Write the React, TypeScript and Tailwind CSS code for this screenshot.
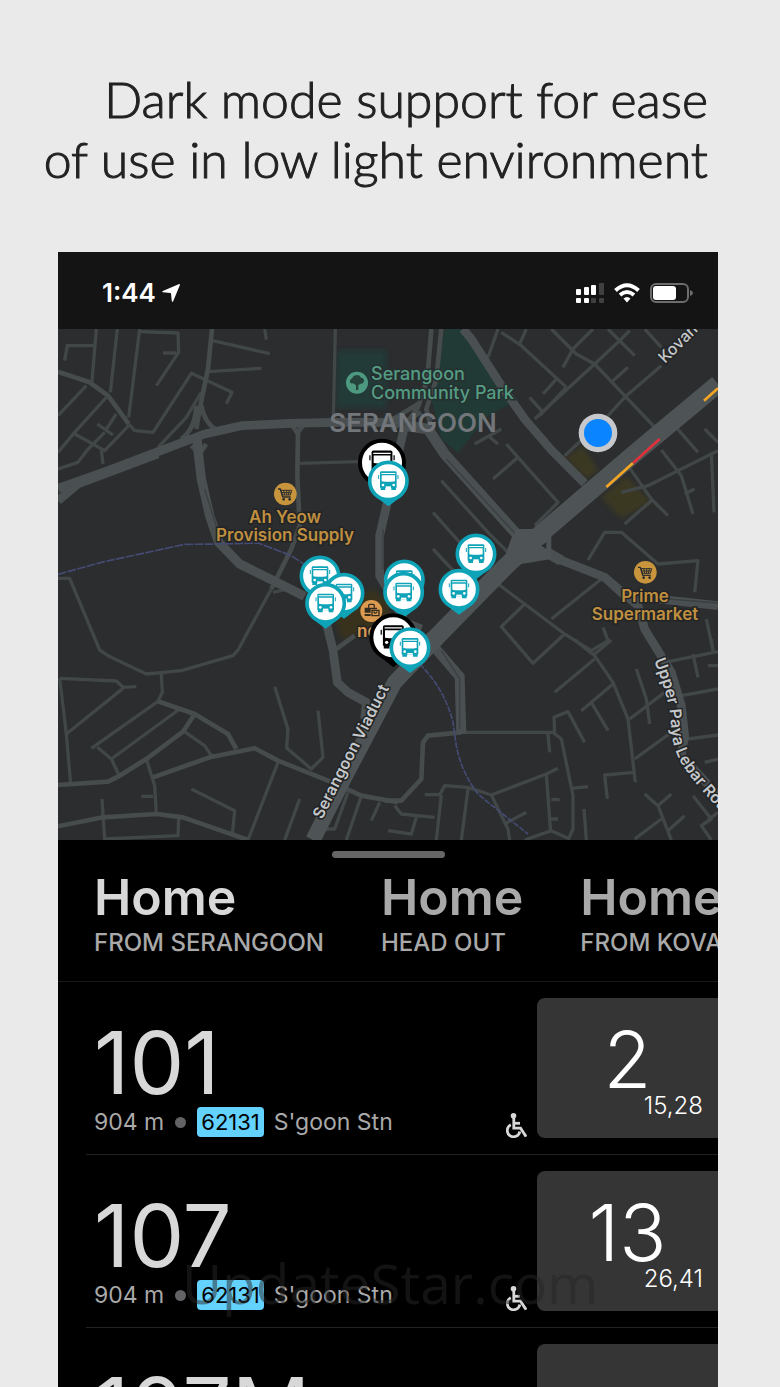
interface Service {
  number: string;
  distance: string;
  stopCode: string;
  stopName: string;
  next: string;
  later: string;
}

interface Pin {
  x: number;
  y: number;
}

const TABS = [
  { title: 'Home', subtitle: 'FROM SERANGOON', active: true },
  { title: 'Home', subtitle: 'HEAD OUT', active: false },
  { title: 'Home', subtitle: 'FROM KOVAN', active: false },
];

const SERVICES: Service[] = [
  { number: '101', distance: '904 m', stopCode: '62131', stopName: "S'goon Stn", next: '2', later: '15,28' },
  { number: '107', distance: '904 m', stopCode: '62131', stopName: "S'goon Stn", next: '13', later: '26,41' },
  { number: '107M', distance: '904 m', stopCode: '62131', stopName: "S'goon Stn", next: '', later: '' },
];

const PINS: Pin[] = [
  { x: 786, y: 741 },
  { x: 858, y: 793 },
  { x: 803, y: 823 },
  { x: 1039, y: 753 },
  { x: 1037, y: 790 },
  { x: 1254, y: 675 },
  { x: 1203, y: 781 },
];

// Map geometry is drawn on a 1980 x 1533 grid
const STREETS = [
  'M115 0L110 60L102 158M178 0L157 190M245 0L212 265M20 95L28 50H108',
  'M245 8L360 12L362 70L295 170M315 72H355M620 0L625 32',
  'M460 34L635 74M450 128L610 118M212 285L230 305L285 310L400 133L522 190L505 224',
  'M85 170L0 260M145 205L50 310L0 370M50 315L140 365L212 290M175 255L145 300M118 285L165 318',
  'M832 0L826 270M430 190L385 265L300 355M0 420L60 400L88 363L140 310M130 363L135 405',
  'M725 403L900 398M640 780L540 963L525 980L370 1025L265 1035L150 980L125 963L35 748H0M645 790L690 780',
  'M310 1035L313 1090L300 1117L100 1258M5 1048L175 1056L195 1075L235 1073M195 1078L25 1215M5 1048L25 1215L38 1365',
  'M365 1140L160 1290M118 1255L160 1290L185 1343M375 1205L440 1250L460 1280',
  'M265 1290L290 1370L295 1455M250 1402H285M132 1410L140 1530L360 1520L362 1465',
  'M400 1380L530 1445L523 1515M660 1300L570 1533M725 1410L680 1533',
  'M650 1073L690 1200L686 1257L760 1320L795 1285L780 1145',
  'M870 1390L830 1500H800M910 1400L865 1533M965 1420L940 1475',
  'M1210 1210H1485L1510 1230L1545 1400V1500L1530 1533M1490 1210L1488 1165L1530 1148L1580 1240M1470 1215L1475 1270',
  'M1300 1398L1465 1335L1500 1318M1465 1335L1478 1510M1480 1412H1505M1480 1470H1500',
  'M1100 1397H1145L1160 1370L1230 1375L1300 1398L1350 1500L1355 1533M1340 1485L1405 1450M1150 1398L1135 1533M1230 1380L1210 1533',
  'M1010 1430L1030 1455L1130 1465M1075 1465L1060 1515L990 1505M1400 1533L1480 1505L1535 1530M1540 1378L1590 1373M1578 1440L1585 1533',
  'M1320 765L1400 825L1520 915L1600 965L1650 935L1635 895M1400 825L1330 893L1425 1003L1520 915M1480 870L1630 750',
  'M1550 933L1610 980L1665 1060L1710 1170L1732 1360M1610 975L1660 933M1610 990L1490 1090M1665 1065L1570 1145M1600 1120L1650 1205',
  'M1730 1330L1640 1338L1648 1410M1715 1170L1820 1090M1730 1290L1840 1210M1735 1020L1765 1110L1775 1185',
  'M1820 1000L1980 968M1905 975L1920 1045M1960 930L1965 970M1870 1100L1980 1080M1890 1230L1980 1218M1940 1300L1980 1290M1950 1010H1980',
  'M1760 1395L1800 1430L1840 1533M1800 1430L1840 1395M1730 1530L1810 1470M1830 1505L1880 1460M1905 1400L1960 1470L1930 1490L1960 1533M1950 1473L1980 1450M1945 870L1965 963',
  'M1590 693L1640 610H1690L1800 705L1920 695L1910 790',
  'M1150 455L1290 610L1370 690M1125 550L1240 680M1125 660L1200 740M1305 450L1380 385L1500 520L1430 590M1345 345L1380 385',
  'M1330 10L1390 50L1525 175M1320 0L1290 85M1405 0L1385 45M1500 145L1455 195M1605 0L1545 60L1515 115',
  'M1480 0L1555 75L1610 105L1705 205L1795 300M1715 5L1690 30L1610 105L1430 270M1650 0L1730 80M1760 0L1810 55',
  'M1810 110L1700 205L1650 260L1520 380M1710 115L1665 155M1415 205L1455 250M1525 175L1445 260',
  'M1940 300L1980 340M1850 290L1920 370M1810 363L1870 440L1905 555M1910 480L1880 495M1960 370L1968 550',
  'M1690 490L1770 470L1980 365M1710 410L1780 510L1830 560M1780 515L1700 585M1250 345L1330 300M1290 320L1320 345',
];

const AVENUES = [
  'M0 128L95 160L150 200L212 285',
  'M462 0L450 120L425 240L415 300',
  'M720 300L718 440L725 590L700 660L640 780',
  'M0 1368L150 1358L180 1343L265 1290L375 1208L410 1155M300 1117L410 1155L510 1215L535 1260',
  'M285 1345L455 1285L590 1258L660 1295L810 1355L910 1400L1020 1420',
  'M0 1492L135 1465L295 1455L375 1465L570 1533',
  'M1210 1210L1110 1220L1095 1240L1090 1350L1030 1415H980',
  'M430 230Q440 285 480 305M415 230Q412 300 370 330M700 285L718 312L738 285M400 350L425 375L445 345',
  'M1120 0L1108 150L1080 235L1040 290M1150 0L1135 150L1105 240L1120 300M990 280L1080 225M1000 300L1090 250',
  'M835 960L890 920',
];

const MAIN_ROADS = [
  'M0 478L150 425L300 368L440 315L550 290L700 283L830 280H990L1040 265',
  'M0 515L60 465L300 375',
  'M1040 290L985 533L965 620V740L1000 800L1040 880L1090 900',
  'M1215 0L1240 30L1330 170L1400 270L1480 363L1580 463',
  'M1500 690L1640 745L1700 800L1800 810L1980 830M1640 745L1740 830L1760 900L1780 933L1840 1030L1870 1130L1880 1220L1870 1280L1980 1400',
  'M800 860L825 963L838 1060L870 1090L925 1120L920 1170',
];

function Road({ paths, stroke, width }: { paths: string[]; stroke: string; width: number }) {
  return (
    <g fill="none" stroke={stroke} strokeWidth={width} strokeLinejoin="round">
      {paths.map((d) => (
        <path key={d} d={d} />
      ))}
    </g>
  );
}

function BusGlyph({ color }: { color: string }) {
  return (
    <g>
      <path d="M-21-29H21Q25-29 25-25V19Q25 21 22 21H-22Q-25 21-25 19V-25Q-25-29-21-29Z" fill={color} />
      <path d="M-21-24H21V-21H-21ZM-20-17H20V1Q0 4-20 1Z" fill="#fff" />
      <path d="M-29-18V-6M29-18V-6" stroke={color} strokeWidth="3" />
      <circle cx="-16" cy="12" r="4" fill="#fff" />
      <circle cx="16" cy="12" r="4" fill="#fff" />
      <path d="M-8 16H8V21H-8Z" fill="#fff" />
      <path d="M-23 20H-9V27H-23ZM9 20H23V27H9Z" fill={color} />
    </g>
  );
}

function BusPin({ x, y }: Pin) {
  return (
    <g transform={`translate(${x} ${y})`}>
      <path d="M-44 43L0 76L44 43Z" fill="#0fa3b8" />
      <circle r="56" fill="#fff" stroke="#0fa3b8" strokeWidth="11" />
      <BusGlyph color="#0fa3b8" />
    </g>
  );
}

function StopPin({ x, y }: Pin) {
  return (
    <g transform={`translate(${x} ${y})`}>
      <path d="M-50 50L0 90L50 50Z" fill="#000" />
      <circle r="66" fill="#fff" stroke="#000" strokeWidth="12" />
      <g transform="scale(1.25)">
        <BusGlyph color="#000" />
      </g>
    </g>
  );
}

function CartMarker({ x, y }: Pin) {
  return (
    <g transform={`translate(${x} ${y})`}>
      <circle r="34" fill="#c9953c" />
      <g fill="none" stroke="#2b2d2f" strokeWidth="4" strokeLinejoin="round">
        <path d="M-22-15H-15L-8 9H16" />
        <path d="M-13-11H19L15 3H-9ZM-5-11L-2 3M4-11V3M12-11L9 3M-11-4H17" strokeWidth="3" />
      </g>
      <circle cx="-5" cy="16" r="4" fill="#2b2d2f" />
      <circle cx="13" cy="16" r="4" fill="#2b2d2f" />
    </g>
  );
}

function TransitMap() {
  return (
    <svg viewBox="0 0 660 511" className="block w-full bg-[#2b2d2f]" role="img" aria-label="Map of Serangoon">
      <defs>
        <path id="viaduct" d="M264 491L338 346" />
        <path id="paya-lebar" d="M596 331C604 352 610 370 612 385C614 405 614 415 620 428C628 445 645 462 662 482L700 525" />
        <path id="kovan" d="M607 35L647 -5" />
        <filter id="soft">
          <feGaussianBlur stdDeviation="8" />
        </filter>
      </defs>

      <g transform="scale(0.33333)">
        <path d="M838 65H985V235H835Z" fill="#233b37" filter="url(#soft)" />
        <path d="M1160 0H1210L1362 222L1290 260L1200 372L1150 330L1118 200Z" fill="#223a36" />
        <path d="M1520 385L1575 350L1622 425L1585 450ZM1628 505L1705 440L1782 520L1690 568Z" fill="#3b3724" filter="url(#soft)" />
        <path d="M830 860L940 780L1000 820L985 900L850 930Z" fill="#37321f" filter="url(#soft)" />

        <Road paths={STREETS} stroke="#414647" width={10} />
        <Road paths={AVENUES} stroke="#464b4c" width={14} />
        <Road paths={MAIN_ROADS} stroke="#4a5051" width={26} />
        <path d="M420 363L430 450L455 560L482 640L545 705L640 752L740 802M415 315L422 370" fill="none" stroke="#4a5051" strokeWidth="28" />
        <path d="M1040 290L1110 300L1160 375L1380 620L1430 650L1510 695" fill="none" stroke="#4a5051" strokeWidth="32" strokeLinejoin="round" />
        <path d="M1100 920L1205 1043L1210 1215" fill="none" stroke="#4a5051" strokeWidth="30" />
        <path d="M765 1533L860 1345L1010 1060L1140 925" fill="none" stroke="#4e5455" strokeWidth="46" />
        <path d="M1110 950L1340 715L1430 630L1590 493L1740 365L1980 165" fill="none" stroke="#4e5455" strokeWidth="54" />
        <path d="M1370 600H1480V690L1390 705L1320 740Z" fill="#4e5455" />
        <path d="M1450 650L1465 640V660Z" fill="#2b2d2f" />
        <path
          d="M1165 390L1370 612M1150 965L1205 1050V1200M975 600V720M1700 800L1980 822M440 480L490 640"
          fill="none"
          stroke="#3a3f40"
          strokeWidth="4"
        />

        <path d="M0 736L130 700L380 646L480 645L600 642L700 680L760 720" fill="none" stroke="#454b73" strokeWidth="5" strokeDasharray="26 4" />
        <path
          d="M1085 1005Q1160 1080 1185 1180L1195 1250Q1210 1330 1260 1395L1290 1420L1410 1515"
          fill="none"
          stroke="#454b73"
          strokeWidth="5"
          strokeDasharray="18 4"
        />

        <path d="M1645 474L1725 402M1938 215L1980 178" stroke="#f5a623" strokeWidth="8" />
        <path d="M1725 402L1805 330" stroke="#e0323c" strokeWidth="8" />

        <g transform="translate(897 161)">
          <circle r="33" fill="#4d9a80" />
          <path d="M-3 22V8L-12 2Q-22 4-21-6Q-20-12-14-13Q-12-22-2-22Q8-25 12-15Q22-14 21-4Q19 5 10 3L4 8V22Z" fill="#25423b" />
        </g>
        <CartMarker x={682} y={495} />
        <CartMarker x={1762} y={730} />
        <g transform="translate(940 846)">
          <circle r="33" fill="#dc9a50" />
          <path d="M-8-10V-16Q-8-20-4-20H5Q9-20 9-16V-10" fill="none" stroke="#332b20" strokeWidth="4" />
          <path d="M-20-10H17V-5H-2V5H-20ZM-20 9H-2V15H-20Z" fill="#332b20" />
          <path d="M2-2H23V14H2ZM7 2Q12 11 18 2" fill="none" stroke="#332b20" strokeWidth="4" />
        </g>
      </g>

      <g fontFamily="Inter, sans-serif" fontWeight="500">
        <g fontSize="18" fill="#559c84" stroke="#25302f" strokeWidth="3" paintOrder="stroke">
          <text x="313" y="51">Serangoon</text>
          <text x="313" y="70">Community Park</text>
        </g>
        <text x="355" y="103" fontSize="26" fontWeight="600" fill="#72767a" textAnchor="middle">SERANGOON</text>
        <g fontSize="17" fontWeight="600" fill="#bf8f3f" stroke="#232425" strokeWidth="3" paintOrder="stroke" textAnchor="middle">
          <text x="227" y="194">Ah Yeow</text>
          <text x="227" y="212">Provision Supply</text>
          <text x="587" y="273">Prime</text>
          <text x="587" y="291">Supermarket</text>
          <text x="314" y="308" fill="#dc9a50">nex</text>
        </g>
        <g fontSize="16" fontWeight="600" fill="#c4c7c9" stroke="#232425" strokeWidth="3" paintOrder="stroke">
          <text><textPath href="#viaduct">Serangoon Viaduct</textPath></text>
          <text><textPath href="#paya-lebar">Upper Paya Lebar Road</textPath></text>
          <text fontWeight="500"><textPath href="#kovan">Kovan</textPath></text>
        </g>
      </g>

      <g transform="scale(0.33333)">
        <circle cx="1620" cy="312" r="58" fill="#c6c8cb" />
        <circle cx="1620" cy="312" r="42" fill="#0a84ff" />
        <StopPin x={972} y={401} />
        <BusPin x={991} y={456} />
        {PINS.map((p) => (
          <BusPin key={`${p.x}-${p.y}`} x={p.x} y={p.y} />
        ))}
        <StopPin x={1006} y={925} />
        <BusPin x={1056} y={956} />
      </g>
    </svg>
  );
}

function StatusBar() {
  return (
    <div className="flex h-[77px] items-center justify-between bg-[#141414] pt-1 pr-[25px] pl-11 text-white">
      <div className="flex items-center gap-1.5">
        <span className="text-[26px] leading-8 font-semibold">1:44</span>
        <svg viewBox="0 0 18 18" className="h-[18px] w-[18px]" fill="#fff">
          <path d="M17.200 .1Q18.200 0 17.900 1L11.200 17.200Q10.600 18.200 9.800 17.200L9 9.600Q9 9 8.400 9L.8 8.300Q-.2 7.700 .8 7.100Z" />
        </svg>
      </div>
      <div className="flex items-center gap-2.5">
        <svg viewBox="0 0 28 20" className="h-5 w-7" fill="#fff">
          <rect x="0" y="6" width="5" height="6" rx="1" />
          <rect x="8" y="4" width="5" height="8" rx="1" />
          <rect x="15" y="2" width="5" height="10" rx="1" />
          <rect x="23" y="0" width="5" height="12" rx="1" fill="#404040" />
          <rect x="0" y="15" width="5" height="5" rx="1" />
          <rect x="8" y="15" width="5" height="5" rx="1" />
          <rect x="15" y="15" width="5" height="5" rx="1" fill="#404040" />
          <rect x="23" y="15" width="5" height="5" rx="1" fill="#404040" />
        </svg>
        <svg viewBox="0 0 26 20" className="h-5 w-[26px]" fill="none" stroke="#fff" strokeWidth="4">
          <path d="M1.500 7.500Q13-3 24.500 7.500" />
          <path d="M6 12Q13 6 20 12" />
          <path d="M9.500 15.500Q13 12.500 16.500 15.500L13 19.500Z" fill="#fff" stroke="none" />
        </svg>
        <svg viewBox="0 0 43 20" className="h-5 w-[43px]">
          <rect x="1" y="1" width="37" height="18" rx="5" fill="none" stroke="#6d6d6d" strokeWidth="2" />
          <rect x="3" y="3" width="23" height="14" rx="3" fill="#fff" />
          <path d="M40 7Q43 8 43 10T40 13Z" fill="#6d6d6d" />
        </svg>
      </div>
    </div>
  );
}

function WheelchairIcon() {
  return (
    <svg
      viewBox="0 0 21 25"
      className="mr-2.5 mb-4 h-[25px] w-[21px] self-end"
      fill="none"
      stroke="#d8d8d8"
      strokeWidth="2.800"
      role="img"
      aria-label="Wheelchair accessible"
    >
      <circle cx="7.500" cy="2.800" r="2.800" fill="#d8d8d8" stroke="none" />
      <path d="M7.800 5V15.200H14.600L19.300 22.400L20.600 21.800" />
      <path d="M8 10.300H14" />
      <path d="M4.800 11.800A6.300 6.300 0 1 0 13.800 18.500" />
    </svg>
  );
}

function ServiceRow({ service }: { service: Service }) {
  return (
    <li className="ml-7 flex h-[173px] border-b border-[#222] pl-2">
      <div className="flex min-w-0 flex-1 flex-col pt-[41px]">
        <h2 className="text-[87px] leading-[80px] font-normal text-[#d8d8d8]">{service.number}</h2>
        <div className="mt-1 flex h-[30px] items-center text-[23px] text-[#a9a9a9]">
          <span>{service.distance}</span>
          <span className="mx-[11px] h-[11px] w-[11px] rounded-full bg-[#636366]" />
          <span className="rounded bg-[#64d2ff] px-1 text-[22px] leading-[30px] text-black">{service.stopCode}</span>
          <span className="ml-2.5">{service.stopName}</span>
        </div>
      </div>
      <WheelchairIcon />
      <div className="my-4 flex w-[181px] flex-col rounded-l-lg bg-[#353535] pt-7 text-white">
        <span className="text-center text-[78px] leading-[68px] font-light">{service.next}</span>
        <span className="pr-[15px] text-right text-2xl leading-6 font-light">{service.later}</span>
      </div>
    </li>
  );
}

export default function App() {
  return (
    <div className="flex h-screen flex-col overflow-hidden bg-[#eaeaea] font-['Inter',sans-serif]">
      <h1 className="shrink-0 pt-[69px] pr-[72px] pb-[63px] text-right font-['Lato',sans-serif] text-[50px] leading-[60px] font-light text-[#222] [-webkit-text-stroke:1px_#222]">
        Dark mode support for ease
        <br />
        of use in low light environment
      </h1>

      <main className="relative mr-[62px] ml-[58px] flex-1 bg-black">
        <StatusBar />
        <TransitMap />

        <div className="overflow-hidden border-b border-[#1a1a1a] pt-[11px] pb-6">
          <div className="mx-auto h-[7px] w-[113px] rounded-full bg-[#666]" />
          <nav className="mt-[11px] flex gap-[57px] pl-9">
            {TABS.map((tab) => (
              <button
                key={tab.subtitle}
                className={
                  tab.active
                    ? 'flex shrink-0 flex-col gap-1 text-left text-[#d8d8d8]'
                    : 'flex shrink-0 flex-col gap-1 text-left text-[#a9a9a9]'
                }
              >
                <span className="text-[50px] leading-[56px] font-semibold">{tab.title}</span>
                <span className="text-2xl leading-7 font-medium text-[#a9a9a9]">{tab.subtitle}</span>
              </button>
            ))}
          </nav>
        </div>

        <ul>
          {SERVICES.map((s) => (
            <ServiceRow key={s.number} service={s} />
          ))}
        </ul>

        <p className="absolute top-[993px] left-[124px] font-['Open_Sans',sans-serif] text-[55px] leading-[76px] text-[#262626]/50">
          UpdateStar.com
        </p>
      </main>
    </div>
  );
}
